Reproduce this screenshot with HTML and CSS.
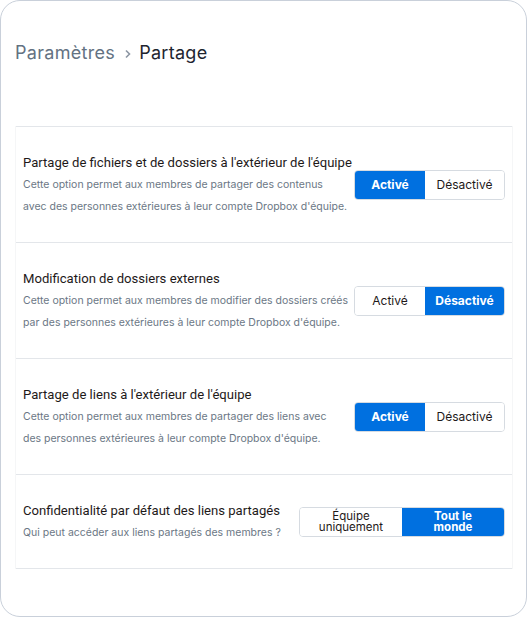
FILE: index.html
```html
<!DOCTYPE html>
<html lang="fr">
<head>
<meta charset="utf-8">
<link rel="stylesheet" href="styles.css">
</head>
<body>
<div class="card">
  <div class="header">
    <span class="crumb">Paramètres</span>
    <span class="chev"><svg width="8" height="10" viewBox="0 0 8 10"><path d="M2 1.5 L5.5 5 L2 8.5" fill="none" stroke="#8c96a3" stroke-width="1.6"/></svg></span>
    <span class="current">Partage</span>
  </div>
  <div class="panel">
    <div class="row">
      <div class="text">
        <div class="title">Partage de fichiers et de dossiers à l'extérieur de l'équipe</div>
        <div class="desc">Cette option permet aux membres de partager des contenus<br>avec des personnes extérieures à leur compte Dropbox d'équipe.</div>
      </div>
      <div class="toggle">
        <span class="opt on w70">Activé</span>
        <span class="opt w80">Désactivé</span>
      </div>
    </div>
    <div class="row">
      <div class="text">
        <div class="title">Modification de dossiers externes</div>
        <div class="desc">Cette option permet aux membres de modifier des dossiers créés<br>par des personnes extérieures à leur compte Dropbox d'équipe.</div>
      </div>
      <div class="toggle">
        <span class="opt w70">Activé</span>
        <span class="opt on w80">Désactivé</span>
      </div>
    </div>
    <div class="row">
      <div class="text">
        <div class="title">Partage de liens à l'extérieur de l'équipe</div>
        <div class="desc">Cette option permet aux membres de partager des liens avec<br>des personnes extérieures à leur compte Dropbox d'équipe.</div>
      </div>
      <div class="toggle">
        <span class="opt on w70">Activé</span>
        <span class="opt w80">Désactivé</span>
      </div>
    </div>
    <div class="row last">
      <div class="text">
        <div class="title">Confidentialité par défaut des liens partagés</div>
        <div class="desc">Qui peut accéder aux liens partagés des membres ?</div>
      </div>
      <div class="toggle">
        <span class="opt two w103">Équipe<br>uniquement</span>
        <span class="opt on two w102">Tout le<br>monde</span>
      </div>
    </div>
  </div>
</div>
</body>
</html>
```
FILE: styles.css
```css
html, body {
  margin: 0;
  padding: 0;
  background: #ffffff;
}
body {
  font-family: "Inter", "Liberation Sans", sans-serif;
}
.card {
  width: 527px;
  height: 617px;
  box-sizing: border-box;
  border: 1px solid #c9d0da;
  border-radius: 20px;
  background: #fff;
  overflow: hidden;
}
.header {
  height: 125px;
  box-sizing: border-box;
  padding: 41px 0 0 14px;
  display: flex;
  align-items: baseline;
  font-size: 18px;
  letter-spacing: 0.3px;
}
.crumb {
  color: #637282;
}
.chev {
  margin: 0 7px 0 9px;
  display: inline-flex;
}
.current {
  color: #1e2530;
}
.panel {
  margin: 0 13px 0 14px;
  border-left: 1px solid #f5f6f7;
  border-right: 1px solid #f5f6f7;
}
.row {
  height: 116px;
  box-sizing: border-box;
  border-top: 1px solid #e3e6ea;
  display: flex;
  align-items: center;
  justify-content: space-between;
  padding: 0 7px 0 7px;
}
.row.last {
  height: 95px;
  border-bottom: 1px solid #e3e6ea;
}
.title {
  font-family: "Roboto", "Liberation Sans", sans-serif;
  font-size: 13.1px;
  color: #1e1919;
  line-height: 22px;
  white-space: nowrap;
}
.desc {
  font-size: 10.5px;
  color: #6b7785;
  line-height: 22px;
  white-space: nowrap;
}
.toggle {
  display: flex;
  height: 30px;
  box-sizing: border-box;
  border: 1px solid #d6dbe1;
  border-radius: 4px;
  overflow: hidden;
  flex: none;
}
.opt {
  display: flex;
  align-items: center;
  justify-content: center;
  font-size: 12px;
  color: #1e1919;
  background: #fff;
  text-align: center;
}
.opt.on {
  background: #0070e0;
  color: #fff;
  font-weight: 700;
}
.opt.two {
  font-size: 11.5px;
  line-height: 11px;
}
.w70 { width: 70px; }
.w80 { width: 79px; }
.w103 { width: 102px; }
.w102 { width: 102px; }
```
